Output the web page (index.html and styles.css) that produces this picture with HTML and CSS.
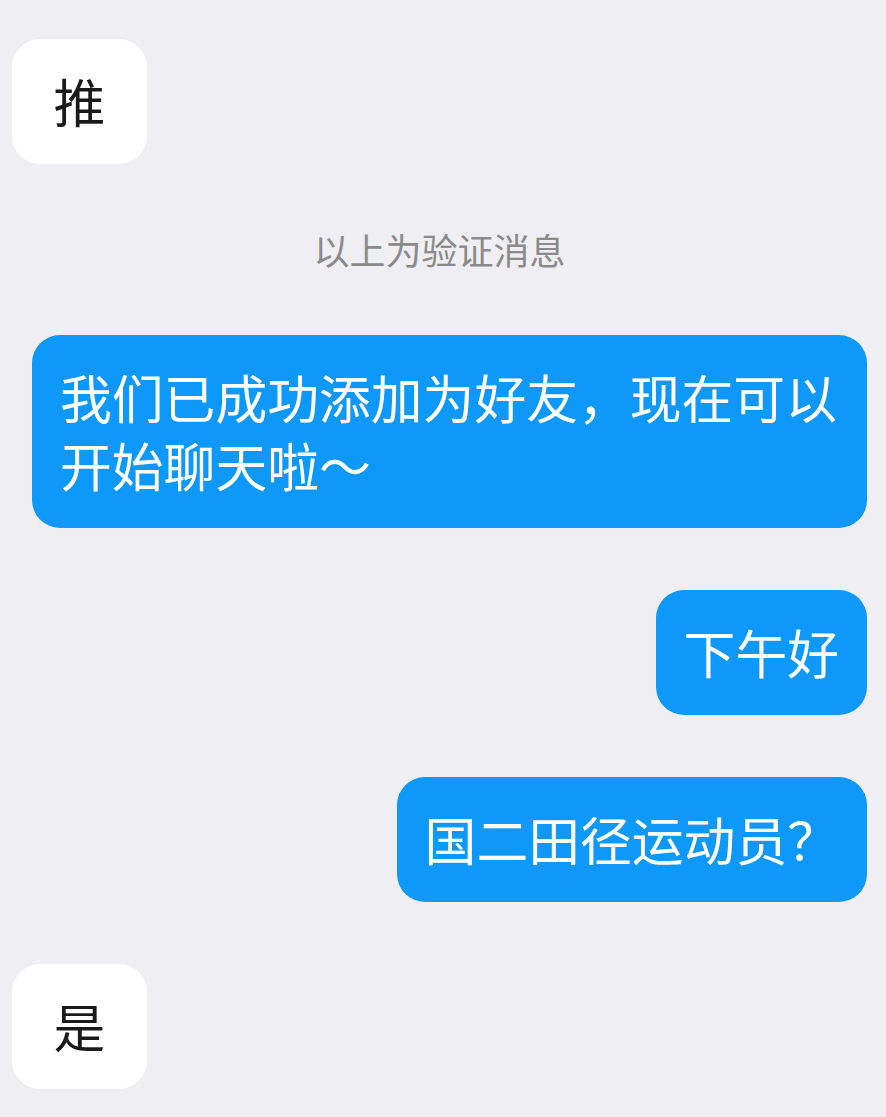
FILE: index.html
```html
<!DOCTYPE html>
<html lang="zh-CN">
<head>
    <meta charset="UTF-8">
    <meta name="viewport" content="width=device-width, initial-scale=1.0">
    <title>聊天</title>
    <link rel="stylesheet" href="styles.css">
</head>
<body>
    <div class="chat">
        <div class="msg left">
            <div class="bubble">推</div>
        </div>

        <div class="notice">以上为验证消息</div>

        <div class="msg right">
            <div class="bubble">我们已成功添加为好友，现在可以开始聊天啦～</div>
        </div>

        <div class="msg right">
            <div class="bubble">下午好</div>
        </div>

        <div class="msg right">
            <div class="bubble">国二田径运动员？</div>
        </div>

        <div class="msg left">
            <div class="bubble">是</div>
        </div>
    </div>
</body>
</html>
```

FILE: styles.css
```css
body {
    margin: 0;
    background-color: #efeff3;
    font-family: "Noto Sans CJK SC", "Noto Sans", sans-serif;
}
.chat {
    display: flex;
    flex-direction: column;
    gap: 62px;
    padding: 39px 19px 30px 12px;
}
.msg {
    display: flex;
}
.msg.left {
    justify-content: flex-start;
}
.msg.right {
    justify-content: flex-end;
    padding-left: 20px;
}
.bubble {
    font-size: 51.8px;
    line-height: 68px;
    padding: 28px 28px 29px 28px;
    border-radius: 28px;
    min-width: 79px;
    text-align: center;
}
.left .bubble {
    background-color: #ffffff;
    color: #1a1a1a;
}
.right .bubble {
    background-color: #0d98fa;
    color: #ffffff;
    text-align: left;
}
.notice {
    text-align: center;
    color: #8a8a8a;
    font-size: 36px;
    line-height: 47px;
}
```
